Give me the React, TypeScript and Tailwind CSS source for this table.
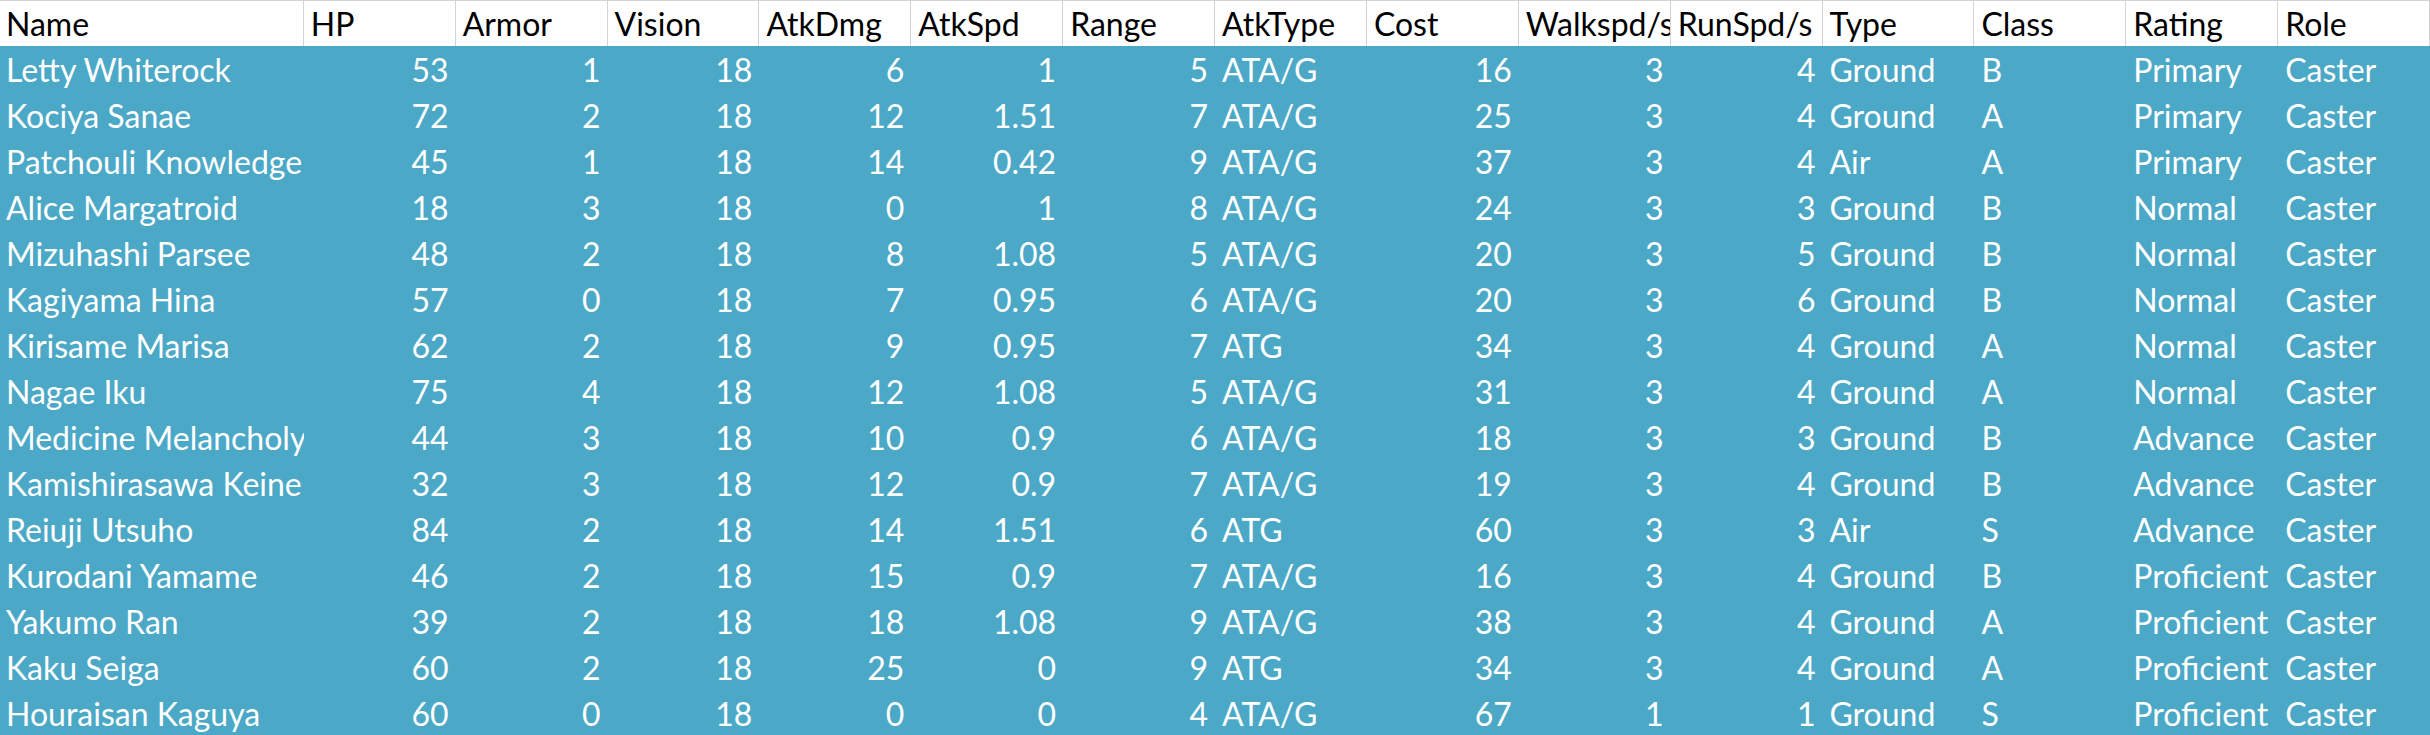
import React from 'react'

const headers = [
  'HP',
  'Armor',
  'Vision',
  'AtkDmg',
  'AtkSpd',
  'Range',
  'AtkType',
  'Cost',
  'Walkspd/s',
  'RunSpd/s',
  'Type',
  'Class',
  'Rating',
  'Role',
]

// which columns hold numbers (right aligned, like excel)
const numeric = [true, true, true, true, true, true, false, true, true, true, false, false, false, false]

const rows: (string | number)[][] = [
  ['Letty Whiterock', 53, 1, 18, 6, 1, 5, 'ATA/G', 16, 3, 4, 'Ground', 'B', 'Primary', 'Caster'],
  ['Kociya Sanae', 72, 2, 18, 12, 1.51, 7, 'ATA/G', 25, 3, 4, 'Ground', 'A', 'Primary', 'Caster'],
  ['Patchouli Knowledge', 45, 1, 18, 14, 0.42, 9, 'ATA/G', 37, 3, 4, 'Air', 'A', 'Primary', 'Caster'],
  ['Alice Margatroid', 18, 3, 18, 0, 1, 8, 'ATA/G', 24, 3, 3, 'Ground', 'B', 'Normal', 'Caster'],
  ['Mizuhashi Parsee', 48, 2, 18, 8, 1.08, 5, 'ATA/G', 20, 3, 5, 'Ground', 'B', 'Normal', 'Caster'],
  ['Kagiyama Hina', 57, 0, 18, 7, 0.95, 6, 'ATA/G', 20, 3, 6, 'Ground', 'B', 'Normal', 'Caster'],
  ['Kirisame Marisa', 62, 2, 18, 9, 0.95, 7, 'ATG', 34, 3, 4, 'Ground', 'A', 'Normal', 'Caster'],
  ['Nagae Iku', 75, 4, 18, 12, 1.08, 5, 'ATA/G', 31, 3, 4, 'Ground', 'A', 'Normal', 'Caster'],
  ['Medicine Melancholy', 44, 3, 18, 10, 0.9, 6, 'ATA/G', 18, 3, 3, 'Ground', 'B', 'Advance', 'Caster'],
  ['Kamishirasawa Keine', 32, 3, 18, 12, 0.9, 7, 'ATA/G', 19, 3, 4, 'Ground', 'B', 'Advance', 'Caster'],
  ['Reiuji Utsuho', 84, 2, 18, 14, 1.51, 6, 'ATG', 60, 3, 3, 'Air', 'S', 'Advance', 'Caster'],
  ['Kurodani Yamame', 46, 2, 18, 15, 0.9, 7, 'ATA/G', 16, 3, 4, 'Ground', 'B', 'Proficient', 'Caster'],
  ['Yakumo Ran', 39, 2, 18, 18, 1.08, 9, 'ATA/G', 38, 3, 4, 'Ground', 'A', 'Proficient', 'Caster'],
  ['Kaku Seiga', 60, 2, 18, 25, 0, 9, 'ATG', 34, 3, 4, 'Ground', 'A', 'Proficient', 'Caster'],
  ['Houraisan Kaguya', 60, 0, 18, 0, 0, 4, 'ATA/G', 67, 1, 1, 'Ground', 'S', 'Proficient', 'Caster'],
]

export default function App() {
  return (
    <main className="h-[735px] w-[2430px] overflow-hidden bg-[#4ba8c6] font-['Lato',sans-serif] text-[32px] leading-none">
      {/* header row */}
      <div className="grid h-[45.9375px] grid-cols-16 border-t border-[#d4d4d4] bg-white text-black">
        <div className="col-span-2 flex items-center border-r border-[#d4d4d4] pt-[2px] pl-[6px]">
          Name
        </div>
        {headers.map((h) => (
          <div
            key={h}
            className="flex items-center overflow-hidden whitespace-nowrap border-r border-[#d4d4d4] pt-[2px] pl-[7px]"
          >
            {h}
          </div>
        ))}
      </div>

      {/* data rows */}
      {rows.map((row) => (
        <div key={row[0] as string} className="grid h-[45.9375px] grid-cols-16 text-white">
          <div className="col-span-2 flex items-center overflow-hidden whitespace-nowrap pt-[3px] pl-[6px]">
            {row[0]}
          </div>
          {row.slice(1).map((v, i) => (
            <div
              key={i}
              className={
                numeric[i]
                  ? 'flex items-center justify-end overflow-hidden whitespace-nowrap pt-[3px] pr-[7px]'
                  : 'flex items-center overflow-hidden whitespace-nowrap pt-[3px] pl-[7px]'
              }
            >
              {v}
            </div>
          ))}
        </div>
      ))}
    </main>
  )
}
